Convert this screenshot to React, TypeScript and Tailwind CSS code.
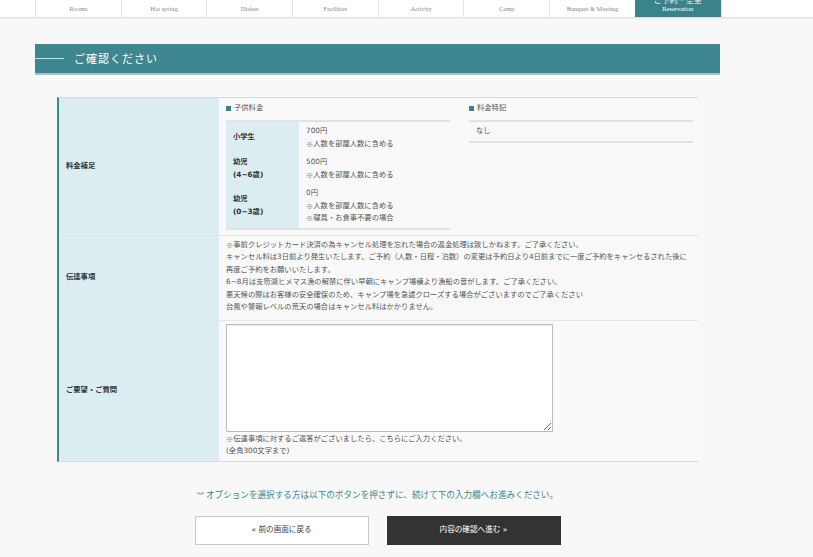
const jp = { fontFamily: '"DejaVu Sans", "Noto Sans CJK JP", sans-serif' };
const mark = { fontFamily: '"Noto Sans CJK KR", "Noto Sans CJK JP", sans-serif' };
const serif = { fontFamily: '"Liberation Serif", "Noto Sans CJK JP", serif' };

const navItems = ["Rooms", "Hot spring", "Dishes", "Facilities", "Activity", "Camp", "Banquet & Meeting"];

const kids = [
  { label: ["小学生"], lines: ["700円", "※人数を部屋人数に含める"] },
  { label: ["幼児", "(4~6歳)"], lines: ["500円", "※人数を部屋人数に含める"] },
  { label: ["幼児", "(0~3歳)"], lines: ["0円", "※人数を部屋人数に含める", "※寝具・お食事不要の場合"] },
];

const notices = [
  "※事前クレジットカード決済の為キャンセル処理を忘れた場合の返金処理は致しかねます。ご了承ください。",
  "キャンセル料は3日前より発生いたします、ご予約（人数・日程・泊数）の変更は予約日より4日前までに一度ご予約をキャンセるされた後に",
  "再度ご予約をお願いいたします。",
  "6~8月は支笏湖ヒメマス漁の解禁に伴い早朝にキャンプ場横より漁船の音がします、ご了承ください。",
  "悪天候の際はお客様の安全確保のため、キャンプ場を急遽クローズする場合がございますのでご了承ください",
  "台風や警報レベルの荒天の場合はキャンセル料はかかりません。",
];

// ※ は別フォントで描く
const Line = ({ text }: { text: string }) =>
  text.startsWith("※") ? (
    <div className="whitespace-nowrap h-[12.5px]">
      <span style={mark} className="inline-block h-[12.5px] leading-[12.5px] align-top text-[#777]">
        ※
      </span>
      {text.slice(1)}
    </div>
  ) : (
    <div className="whitespace-nowrap h-[12.5px]">{text}</div>
  );

const Label = ({ text }: { text: string }) => (
  <div className="w-[160px] shrink-0 bg-[#dbedf0] flex items-center pl-[7px] text-[7.3px] font-bold text-[#333]">
    {text}
  </div>
);

const App = () => {
  return (
    <div className="min-h-[557px] w-[813px] bg-[#f8f8f8] text-[#555]" style={jp}>
      {/* nav */}
      <div className="h-[17px] bg-white shadow-[0_1px_2px_rgba(0,0,0,0.12)] flex pl-[35px]">
        {navItems.map((n) => (
          <div
            key={n}
            className="w-[85.7px] border-l border-[#e2e2e2] flex items-center justify-center text-[6.5px] text-[#8a8a8a]"
            style={serif}
          >
            {n}
          </div>
        ))}
        <div
          className="w-[85.7px] bg-[#3a8489] flex flex-col items-center justify-end pb-[4px] text-[6.5px] text-white leading-[8px] overflow-hidden"
          style={serif}
        >
          <div className="text-[8px] leading-[8px] opacity-90">ご予約・空室</div>
          <div>Reservation</div>
        </div>
        <div className="border-l border-[#e2e2e2]" />
      </div>

      <div className="ml-[35px] w-[685px] mt-[27px]">
        {/* heading bar */}
        <div className="h-[31px] bg-[#3f8790] border-b-[2px] border-[#9cc6cc] flex items-center">
          <div className="w-[29px] h-px bg-[#c8dfe2]" />
          <div className="ml-[10px] text-[11px] text-white tracking-[1px]" style={{ fontFamily: '"Noto Sans CJK JP", sans-serif' }}>
            ご確認ください
          </div>
        </div>

        {/* table */}
        <div className="mx-[22px] mt-[22px] border-l-2 border-[#3f8790] border-t border-t-[#d6dcdc] border-b border-b-[#d6dcdc]">
          {/* row 1 */}
          <div className="flex border-b border-[#e1e6e6]">
            <Label text="料金補足" />
            <div className="flex-1 bg-[#f9f9f9] flex gap-[19px] pl-[7px] pt-[5px] pb-[5px]">
              <div className="w-[224px]">
                <div className="text-[7.3px] leading-[10px] flex items-center">
                  <span className="inline-block w-[5px] h-[5px] bg-[#3a8489] mr-[3px]" />
                  子供料金
                </div>
                <div className="mt-[7px] border-t-2 border-b-2 border-[#e3e3e3]">
                  {kids.map((k, i) => (
                    <div key={i} className="flex">
                      <div className="w-[73px] bg-[#dbedf0] flex flex-col justify-center pl-[7px] py-[3px] text-[7.3px] leading-[12.5px] font-bold text-[#333]">
                        {k.label.map((l) => (
                          <div key={l}>{l}</div>
                        ))}
                      </div>
                      <div className="flex-1 pl-[7px] py-[3px] text-[7.3px] leading-[12.5px]">
                        {k.lines.map((l) => (
                          <Line key={l} text={l} />
                        ))}
                      </div>
                    </div>
                  ))}
                </div>
              </div>
              <div className="w-[224px]">
                <div className="text-[7.3px] leading-[10px] flex items-center">
                  <span className="inline-block w-[5px] h-[5px] bg-[#3a8489] mr-[3px]" />
                  料金特記
                </div>
                <div className="mt-[7px] border-t-2 border-b-2 border-[#e3e3e3] pl-[7px] py-[3px] text-[7.3px] leading-[12.5px]">
                  なし
                </div>
              </div>
            </div>
          </div>

          {/* row 2 */}
          <div className="flex border-b border-[#e1e6e6]">
            <Label text="伝達事項" />
            <div className="flex-1 bg-[#f9f9f9] pl-[7px] pt-[3px] pb-[6px] text-[7.3px] leading-[12.5px]">
              {notices.map((n) => (
                <Line key={n} text={n} />
              ))}
            </div>
          </div>

          {/* row 3 */}
          <div className="flex">
            <Label text="ご要望・ご質問" />
            <div className="flex-1 bg-[#f9f9f9] pl-[7px] pt-[3px] pb-[3px] text-[7.3px] leading-[12.5px]">
              <textarea className="block w-[327px] h-[108px] bg-white border border-[#bbb] rounded-[1px] shadow-[inset_0_1px_1px_rgba(0,0,0,0.08)]" />
              <div className="mt-[1px]">
                <Line text="※伝達事項に対するご返答がございましたら、こちらにご入力ください。" />
              </div>
              <div>(全角300文字まで)</div>
            </div>
          </div>
        </div>

        {/* note */}
        <div className="mt-[27px] text-center text-[8.6px] text-[#3f8790] leading-[12px]">
          <span className="text-[7px] mr-[2px]">︾</span>オプションを選択する方は以下のボタンを押さずに、続けて下の入力欄へお進みください。
        </div>

        {/* buttons */}
        <div className="mt-[14px] flex justify-center gap-[18px]">
          <button className="w-[174px] h-[29px] bg-white border border-[#c9c9c9] text-[7.6px] text-[#444]">
            « 前の画面に戻る
          </button>
          <button className="w-[174px] h-[29px] bg-[#333] text-[7.6px] text-white">
            内容の確認へ進む »
          </button>
        </div>
      </div>
    </div>
  );
};

export default App;
